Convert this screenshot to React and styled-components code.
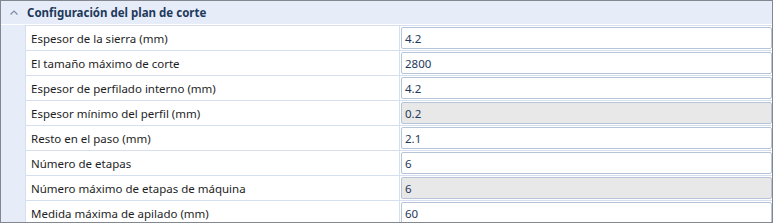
import React from "react";
import styled, { createGlobalStyle } from "styled-components";

const rows = [
  { label: "Espesor de la sierra (mm)", value: "4.2" },
  { label: "El tamaño máximo de corte", value: "2800" },
  { label: "Espesor de perfilado interno (mm)", value: "4.2" },
  { label: "Espesor mínimo del perfil (mm)", value: "0.2", disabled: true },
  { label: "Resto en el paso (mm)", value: "2.1" },
  { label: "Número de etapas", value: "6" },
  { label: "Número máximo de etapas de máquina", value: "6", disabled: true },
  { label: "Medida máxima de apilado (mm)", value: "60" },
];

function App() {
  return (
    <>
      <GlobalStyle />
      <Panel>
        <Header>
          <Chevron viewBox="0 0 8 5">
            <path d="M0.5 4.5 L4 1 L7.5 4.5" />
          </Chevron>
          <Title>Configuración del plan de corte</Title>
        </Header>
        <Body>
          <Gutter />
          <Grid>
            {rows.map((r) => (
              <Row key={r.label}>
                <Label>{r.label}</Label>
                <ValueCell>
                  <Input $disabled={r.disabled}>{r.value}</Input>
                </ValueCell>
              </Row>
            ))}
          </Grid>
        </Body>
      </Panel>
    </>
  );
}

export default App;

const GlobalStyle = createGlobalStyle`
  body {
    margin: 0;
    background: #fff;
    font-family: "Noto Sans", "Open Sans", sans-serif;
    font-size: 11.5px;
  }
`;

const Panel = styled.div`
  width: 773px;
  height: 223px;
  box-sizing: border-box;
  border: 1px solid #828790;
  overflow: hidden;
  display: flex;
  flex-direction: column;
  background: #fff;
`;

const Header = styled.div`
  height: 23px;
  flex-shrink: 0;
  background: #e6edf9;
  border-bottom: 1px solid #ffffff;
  display: flex;
  align-items: center;
`;

const Chevron = styled.svg`
  width: 8px;
  height: 5px;
  margin-left: 9px;
  margin-right: 9px;
  fill: none;
  stroke: #7d8ba3;
  stroke-width: 1.2;
`;

const Title = styled.span`
  font-weight: bold;
  color: #1e395b;
  font-size: 11.5px;
`;

const Body = styled.div`
  display: flex;
  flex: 1;
  min-height: 0;
`;

const Gutter = styled.div`
  width: 24px;
  flex-shrink: 0;
  background: #e6edf9;
  border-right: 1px solid #d5dfee;
`;

const Grid = styled.div`
  flex: 1;
  display: flex;
  flex-direction: column;
`;

const Row = styled.div`
  display: flex;
  height: 24px;
  flex-shrink: 0;
  border-top: 1px solid #d5dfee;
`;

const Label = styled.div`
  width: 374px;
  flex-shrink: 0;
  box-sizing: border-box;
  padding-left: 5px;
  border-right: 1px solid #d5dfee;
  display: flex;
  align-items: center;
  color: #1e1e1e;
`;

const ValueCell = styled.div`
  flex: 1;
  display: flex;
  align-items: center;
  padding-left: 1px;
`;

const Input = styled.div`
  flex: 1;
  height: 22px;
  box-sizing: border-box;
  border: 1px solid #b6c4da;
  border-radius: 2px;
  background: ${(p) => (p.$disabled ? "#e8e8e8" : "#fff")};
  color: #1e395b;
  padding-left: 3px;
  display: flex;
  align-items: center;
`;
